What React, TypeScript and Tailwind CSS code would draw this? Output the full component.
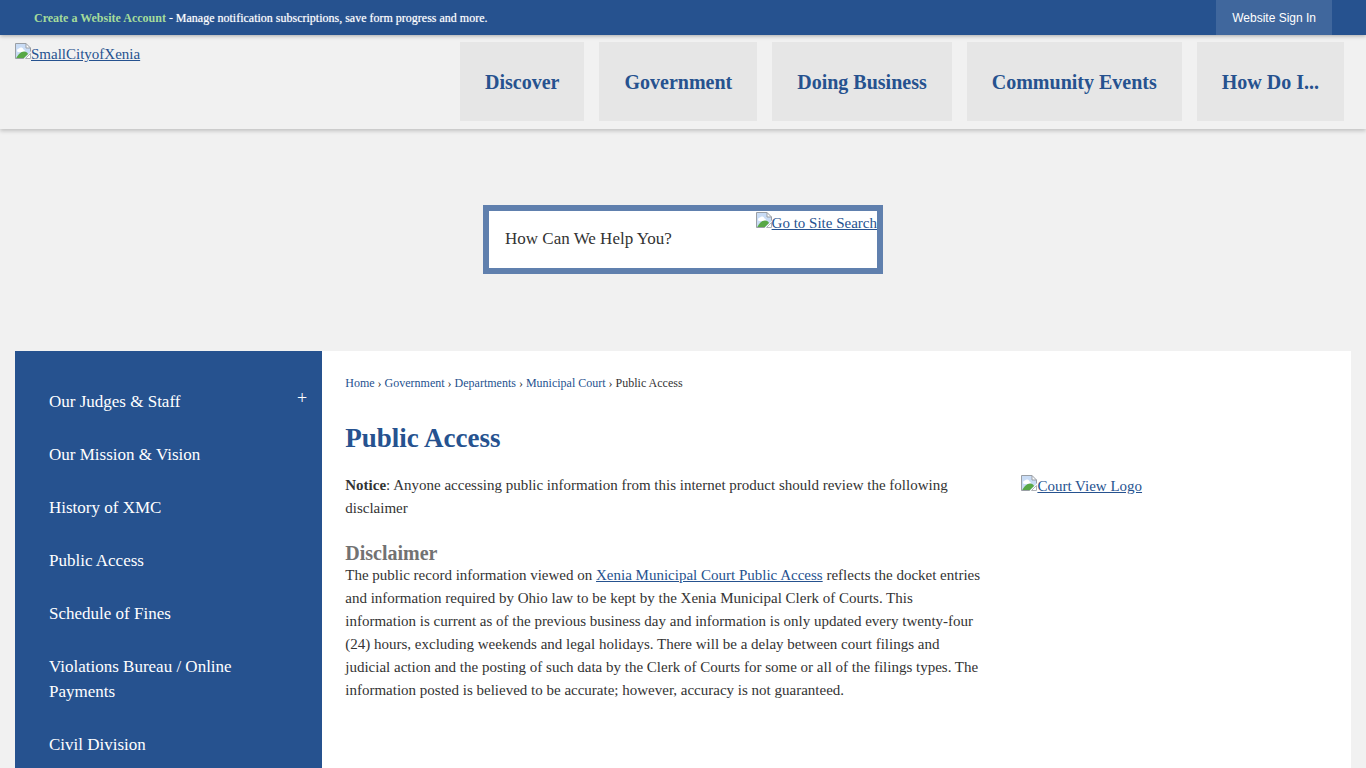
import type React from "react";

const navItems = ["Discover", "Government", "Doing Business", "Community Events", "How Do I..."];

const crumbs = ["Home", "Government", "Departments", "Municipal Court"];

const sideItems = [
    { label: "Our Judges & Staff", expandable: true },
    { label: "Our Mission & Vision" },
    { label: "History of XMC" },
    { label: "Public Access" },
    { label: "Schedule of Fines" },
    { label: "Violations Bureau / Online Payments" },
    { label: "Civil Division" },
];

const BrokenImage: React.FC = () => (
    <svg className="w-4 h-4 shrink-0" viewBox="0 0 16 16" aria-hidden="true">
        <path d="M0.5 0.5H11L15.5 5V9L9 15.5H0.5Z" fill="#c9dcf5" />
        <path d="M2 7.5a2 2 0 0 1 2-2a2.5 2.5 0 0 1 4.5 1a1.5 1.5 0 0 1 1 2.5H3a1.5 1.5 0 0 1-1-1.500Z" fill="#fff" />
        <path d="M1 15.5C3 11.5 6 8.5 9 8.500C11 8.500 12.500 9.500 13 11L8.500 15.500Z" fill="#58a846" />
        <path d="M11 0.500V5H15.500Z" fill="#fff" />
        <path d="M8.500 15.500H0.500V0.500H11L15.500 5V8.500M11 0.500V5H15.500" fill="none" stroke="#9a9fa5" />
        <path d="M15.500 10.500V15.500H10.500Z" fill="#fff" stroke="#b0b3b8" />
    </svg>
);

const ImageLink: React.FC<{ alt: string }> = ({ alt }) => (
    <a href="#" className="flex items-start pt-px text-[15px] leading-[23px] text-[#26528f]">
        <BrokenImage />
        <span className="underline">{alt}</span>
    </a>
);

const App: React.FC = () => {
    return (
        <div className="min-h-screen bg-[#f1f1f1] font-['Liberation_Serif',serif] text-[15px] leading-[23px] text-[#333]">
            <div className="relative flex h-[35px] items-center justify-between bg-[#26528f] px-[34px] text-xs text-white shadow-[0_1px_4px_rgba(0,0,0,0.3)] text-shadow-[0_0_1px_rgba(255,255,255,0.6)]">
                <p>
                    <a href="#" className="font-bold text-[#a5dc9b] text-shadow-none">Create a Website Account</a>
                    {" - Manage notification subscriptions, save form progress and more."}
                </p>
                <button className="h-full bg-[#40679d] px-4 font-['Liberation_Sans',sans-serif]">
                    Website Sign In
                </button>
            </div>

            <header className="flex items-start justify-between pb-2 pl-[15px] pr-[22px] pt-[7px] shadow-[0_2px_4px_rgba(0,0,0,0.2)]">
                <ImageLink alt="SmallCityofXenia" />
                <nav className="flex gap-[15px]">
                    {navItems.map((item) => (
                        <a key={item} href="#" className="flex h-[79px] items-center bg-[#e6e6e6] px-[25px] text-xl font-bold text-[#26528f]">
                            {item}
                        </a>
                    ))}
                </nav>
            </header>

            <form className="mx-auto mt-[76px] mb-[77px] flex h-[69px] w-[400px] items-start border-[6px] border-[#6080ae] bg-white" onSubmit={(e) => e.preventDefault()}>
                <input
                    type="text"
                    aria-label="Search"
                    placeholder="How Can We Help You?"
                    className="h-[55px] min-w-0 flex-1 pl-4 text-[17px] outline-none placeholder:text-[#333] placeholder:opacity-100"
                />
                <ImageLink alt="Go to Site Search" />
            </form>

            <div className="mx-[15px] flex min-h-[417px] bg-white">
                <aside className="w-[23%] shrink-0 bg-[#26528f] pb-6 pt-6">
                    <ul>
                        {sideItems.map((item) => (
                            <li key={item.label} className="flex items-start justify-between pl-[34px] pr-[15px]">
                                <a href="#" className="max-w-[220px] py-[14px] text-[17px] leading-[25px] text-white">
                                    {item.label}
                                </a>
                                {item.expandable && (
                                    <button aria-label={`Expand ${item.label}`} className="pt-[11px] text-lg leading-[25px] text-white">
                                        +
                                    </button>
                                )}
                            </li>
                        ))}
                    </ul>
                </aside>

                <main className="min-w-0 flex-1 pl-[23px] pr-6 pt-5">
                    <nav aria-label="Breadcrumb" className="text-xs leading-6">
                        {crumbs.map((crumb) => (
                            <span key={crumb}>
                                <a href="#" className="text-[#26528f]">{crumb}</a>
                                {" › "}
                            </span>
                        ))}
                        <span>Public Access</span>
                    </nav>
                    <h1 className="mt-[23px] text-[27px] leading-10 font-bold text-[#26528f]">Public Access</h1>
                    <div className="mt-4 flex gap-[38px]">
                        <div className="w-[65%] shrink-0">
                            <p>
                                <strong>Notice</strong>: Anyone accessing public information from this internet product should review the following disclaimer
                            </p>
                            <h2 className="mt-[22px] text-xl leading-[22px] font-bold text-[#727272]">Disclaimer</h2>
                            <p>
                                The public record information viewed on{" "}
                                <a href="#" className="text-[#26528f] underline">Xenia Municipal Court Public Access</a>{" "}
                                reflects the docket entries and information required by Ohio law to be kept by the Xenia Municipal Clerk of Courts. This information is current as of the previous business day and information is only updated every twenty-four (24) hours, excluding weekends and legal holidays. There will be a delay between court filings and judicial action and the posting of such data by the Clerk of Courts for some or all of the filings types. The information posted is believed to be accurate; however, accuracy is not guaranteed.
                            </p>
                        </div>
                        <ImageLink alt="Court View Logo" />
                    </div>
                </main>
            </div>
        </div>
    );
};

export default App;
